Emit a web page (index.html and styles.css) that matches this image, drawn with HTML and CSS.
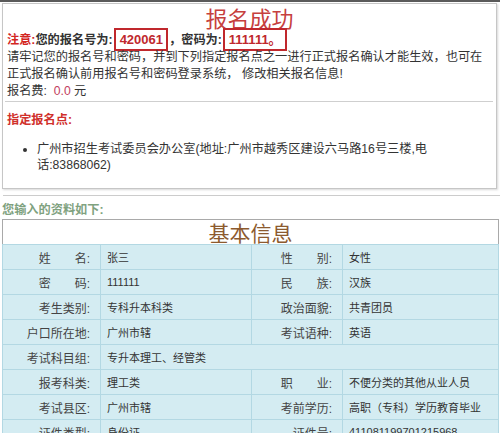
FILE: index.html
```html
<!DOCTYPE html>
<html lang="zh-CN">
<head>
<meta charset="utf-8">
<title>报名成功</title>
<link rel="stylesheet" href="styles.css">
</head>
<body>
<div class="topbar"></div>
<div class="panel">
  <h1 class="title">报名成功</h1>
  <p class="line notice"><span class="red">注意:</span>您的报名号为:<span class="boxed">420061</span>，密码为:<span class="boxed">111111。</span></p>
  <p class="line">请牢记您的报名号和密码，并到下列指定报名点之一进行正式报名确认才能生效，也可在<br>正式报名确认前用报名号和密码登录系统，&nbsp;修改相关报名信息!</p>
  <p class="line">报名费:&nbsp;&nbsp;<span class="fee">0.0</span> 元</p>
  <div class="sep"></div>
  <p class="line subhead">指定报名点:</p>
  <ul class="points">
    <li>广州市招生考试委员会办公室(地址:广州市越秀区建设六马路16号三楼,电<br>话:83868062)</li>
  </ul>
</div>
<div class="rule"></div>
<p class="line inputhead">您输入的资料如下:</p>
<table class="info">
  <colgroup>
    <col class="c1"><col class="c2"><col class="c3"><col class="c4">
  </colgroup>
  <tr class="head"><th colspan="4">基本信息</th></tr>
  <tr><td class="lb">姓　　名:</td><td>张三</td><td class="lb">性　　别:</td><td>女性</td></tr>
  <tr><td class="lb">密　　码:</td><td>111111</td><td class="lb">民　　族:</td><td>汉族</td></tr>
  <tr><td class="lb">考生类别:</td><td>专科升本科类</td><td class="lb">政治面貌:</td><td>共青团员</td></tr>
  <tr><td class="lb">户口所在地:</td><td>广州市辖</td><td class="lb">考试语种:</td><td>英语</td></tr>
  <tr><td class="lb">考试科目组:</td><td colspan="3">专升本理工、经管类</td></tr>
  <tr><td class="lb">报考科类:</td><td>理工类</td><td class="lb">职　　业:</td><td>不便分类的其他从业人员</td></tr>
  <tr><td class="lb">考试县区:</td><td>广州市辖</td><td class="lb">考前学历:</td><td>高职（专科）学历教育毕业</td></tr>
  <tr><td class="lb">证件类型:</td><td>身份证</td><td class="lb">证件号:</td><td>411081199701215968</td></tr>
</table>
</body>
</html>
```

FILE: styles.css
```css
html, body {
  margin: 0;
  padding: 0;
  background: #ffffff;
}
body {
  font-family: "Liberation Sans", "Noto Sans CJK SC", sans-serif;
  font-size: 12.2px;
  color: #333333;
  width: 500px;
  overflow: hidden;
}
.topbar {
  height: 2px;
  background: #5a5a5a;
}
.panel {
  margin: 1px 3px 0 2px;
  border: 1px solid #c6c6c6;
  box-shadow: 1px 1px 2px #d8d8d8;
  padding: 0 4px 15px 4px;
}
.title {
  margin: 0 0 2px 0;
  font-family: "Noto Sans CJK SC", sans-serif;
  font-weight: normal;
  font-size: 22px;
  line-height: 26px;
  text-align: center;
  color: #c6403e;
}
.line {
  margin: 0;
  line-height: 17px;
  white-space: nowrap;
}
.notice {
  font-weight: bold;
  color: #333333;
}
.red {
  color: #d3261f;
}
.boxed {
  display: inline-block;
  border: 2px solid #c0282d;
  color: #c0282d;
  font-size: 13px;
  line-height: 17px;
  padding: 1px 3px 1px 4px;
  margin: -4px 1px -4px 1px;
  vertical-align: baseline;
}
.fee {
  color: #c2405e;
}
.sep {
  border-top: 1px solid #cfcfcf;
  margin: 1px -1px 10px -2px;
}
.subhead {
  font-weight: bold;
  color: #d0302b;
}
.points {
  margin: 12px 0 0 0;
  padding-left: 30px;
}
.points li {
  line-height: 16px;
  white-space: nowrap;
}
.rule {
  border-top: 1px solid #cccccc;
  margin: 6px 0 0 3px;
}
.inputhead {
  margin: 6px 0 0 2px;
  font-weight: bold;
  color: #7fa27f;
}
.info {
  margin: 0 0 0 2px;
  width: 496px;
  border-collapse: collapse;
  table-layout: fixed;
  border: 1px solid #a9a9a9;
}
.c1 { width: 98px; }
.c2 { width: 151px; }
.c3 { width: 91px; }
.c4 { width: 156px; }
.info th {
  height: 24px;
  padding: 0;
  font-family: "Noto Sans CJK SC", sans-serif;
  font-weight: normal;
  font-size: 21px;
  line-height: 24px;
  color: #8c5a2e;
  background: #ffffff;
}
.info td {
  height: 24px;
  padding: 0 0 0 6px;
  background: #d4ecf2;
  border: 1px solid #b3d8e3;
  color: #333333;
  font-size: 11px;
  white-space: nowrap;
  overflow: hidden;
}
.info td.lb {
  text-align: right;
  padding: 0 10px 0 0;
  color: #444444;
  font-size: 12px;
}
```
